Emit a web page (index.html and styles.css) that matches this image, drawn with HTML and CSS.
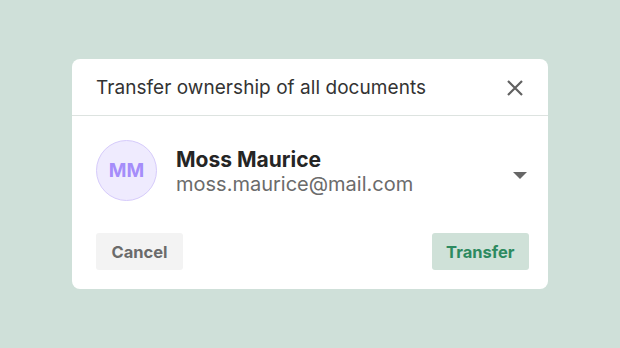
FILE: index.html
```html
<!DOCTYPE html>
<html>
<head>
<meta charset="utf-8">
<link rel="stylesheet" href="styles.css">
</head>
<body>
<div class="dialog">
  <div class="header">
    <div class="title">Transfer ownership of all documents</div>
    <svg class="close" width="18" height="18" viewBox="0 0 18 18"><path d="M2 2L16 16M16 2L2 16" stroke="#616161" stroke-width="2.2" stroke-linecap="butt" fill="none"/></svg>
  </div>
  <div class="body">
    <div class="user">
      <div class="avatar">MM</div>
      <div class="info">
        <div class="name">Moss Maurice</div>
        <div class="email">moss.maurice@mail.com</div>
      </div>
      <svg class="caret" width="14" height="8" viewBox="0 0 14 8"><path d="M0 0H14L7 7Z" fill="#666"/></svg>
    </div>
    <div class="actions">
      <button class="btn cancel">Cancel</button>
      <button class="btn transfer">Transfer</button>
    </div>
  </div>
</div>
</body>
</html>
```
FILE: styles.css
```css
html, body {
  margin: 0;
  height: 100%;
}
body {
  background: #cfe0d9;
  font-family: Inter, "Noto Sans", sans-serif;
  display: flex;
  align-items: center;
  justify-content: center;
}
.dialog {
  width: 476px;
  height: 230px;
  background: #fff;
  border-radius: 8px;
  display: flex;
  flex-direction: column;
}
.header {
  height: 57px;
  box-sizing: border-box;
  border-bottom: 1px solid #dde3e0;
  display: flex;
  align-items: center;
  justify-content: space-between;
  padding: 0 24px 0 24px;
}
.title {
  font-size: 19px;
  color: #333;
  letter-spacing: 0.05px;
}
.close {
  display: block;
  margin-top: 2px;
}
.body {
  padding: 24px 19px 19px 24px;
  display: flex;
  flex-direction: column;
  flex: 1;
}
.user {
  display: flex;
  align-items: center;
}
.avatar {
  width: 59px;
  height: 59px;
  border: 1px solid #d6cbfb;
  background: #efebfe;
  border-radius: 50%;
  color: #a58dfa;
  font-weight: 700;
  font-size: 19px;
  display: flex;
  align-items: center;
  justify-content: center;
}
.info {
  margin-left: 19px;
  padding-top: 2px;
  flex: 1;
  display: flex;
  flex-direction: column;
}
.name {
  font-size: 21px;
  font-weight: 700;
  color: #252525;
  line-height: 24px;
}
.email {
  font-size: 20px;
  color: #6b6b6b;
  line-height: 24px;
}
.caret {
  display: block;
  margin-right: 2px;
  margin-top: 10px;
}
.actions {
  margin-top: auto;
  display: flex;
  justify-content: space-between;
}
.btn {
  border: none;
  border-radius: 3px;
  height: 37px;
  font-family: Inter, "Noto Sans", sans-serif;
  font-size: 16.5px;
  font-weight: 700;
  padding: 0 15.5px;
}
.transfer {
  padding: 0 14.5px;
}
.cancel {
  background: #f3f3f3;
  color: #6b6b6b;
}
.transfer {
  background: #cfe1d8;
  color: #2d8a60;
}
```
